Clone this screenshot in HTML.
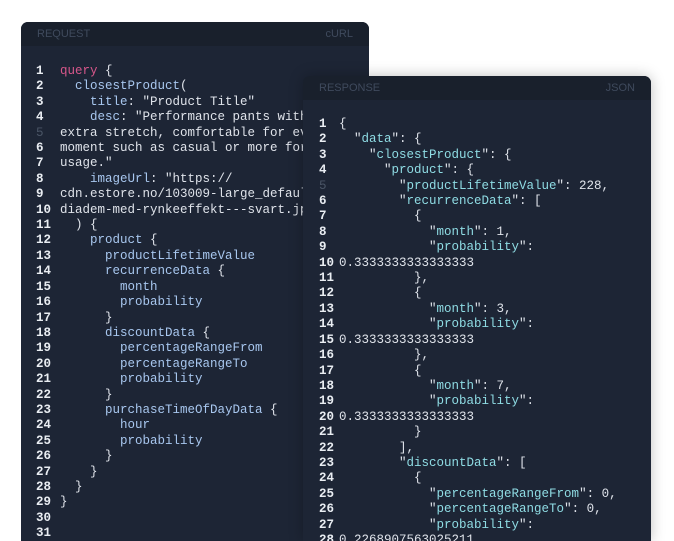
<!DOCTYPE html><html style="overflow:hidden;height:541px"><head><style>
body{margin:0;width:674px;height:541px;background:#fff;overflow:hidden;position:relative;font-family:"Liberation Mono",monospace}
.p{position:absolute;background:#1d2535;border-radius:7px 7px 0 0;overflow:hidden}
.h{height:24px;background:#19202c;color:#3f4a5d;font:11px "Liberation Sans",sans-serif;display:flex;justify-content:space-between;align-items:center;padding:0 16px}
.c{position:absolute;font-size:12.5px;line-height:15.4px;color:#dfe3ea;white-space:pre}
.n{position:absolute;font-size:12.5px;line-height:15.4px;color:#e9edf2;font-weight:bold;white-space:pre}
.k{color:#d6568a}.f{color:#a8c7ef}.j{color:#8fdce4}.d{color:#4a5566;font-weight:normal}
</style></head><body>
<div class="p" style="left:21px;top:22px;width:348px;height:519px">
<div class="h"><span>REQUEST</span><span>cURL</span></div>
<div class="n" style="left:15px;top:42px">1
2
3
4
<span class="d">5</span>
6
7
8
9
10
11
12
13
14
15
16
17
18
19
20
21
22
23
24
25
26
27
28
29
30
31</div>
<div class="c" style="left:39px;top:42px"><span class="k">query</span> {
  <span class="f">closestProduct</span>(
    <span class="f">title</span>: "Product Title"
    <span class="f">desc</span>: "Performance pants with
extra stretch, comfortable for every
moment such as casual or more formal
usage."
    <span class="f">imageUrl</span>: "https://
cdn.estore.no/103009-large_default/
diadem-med-rynkeeffekt---svart.jpg"
  ) {
    <span class="f">product</span> {
      <span class="f">productLifetimeValue</span>
      <span class="f">recurrenceData</span> {
        <span class="f">month</span>
        <span class="f">probability</span>
      }
      <span class="f">discountData</span> {
        <span class="f">percentageRangeFrom</span>
        <span class="f">percentageRangeTo</span>
        <span class="f">probability</span>
      }
      <span class="f">purchaseTimeOfDayData</span> {
        <span class="f">hour</span>
        <span class="f">probability</span>
      }
    }
  }
}</div>
</div>
<div class="p" style="left:303px;top:76px;width:348px;height:465px;box-shadow:0 0 14px rgba(0,0,0,.25)">
<div class="h"><span>RESPONSE</span><span>JSON</span></div>
<div class="n" style="left:16px;top:41px">1
2
3
4
<span class="d">5</span>
6
7
8
9
10
11
12
13
14
15
16
17
18
19
20
21
22
23
24
25
26
27
28</div>
<div class="c" style="left:36px;top:41px">{
  "<span class="j">data</span>": {
    "<span class="j">closestProduct</span>": {
      "<span class="j">product</span>": {
        "<span class="j">productLifetimeValue</span>": 228,
        "<span class="j">recurrenceData</span>": [
          {
            "<span class="j">month</span>": 1,
            "<span class="j">probability</span>":
0.3333333333333333
          },
          {
            "<span class="j">month</span>": 3,
            "<span class="j">probability</span>":
0.3333333333333333
          },
          {
            "<span class="j">month</span>": 7,
            "<span class="j">probability</span>":
0.3333333333333333
          }
        ],
        "<span class="j">discountData</span>": [
          {
            "<span class="j">percentageRangeFrom</span>": 0,
            "<span class="j">percentageRangeTo</span>": 0,
            "<span class="j">probability</span>":
0.2268907563025211</div>
</div>
</body></html>
